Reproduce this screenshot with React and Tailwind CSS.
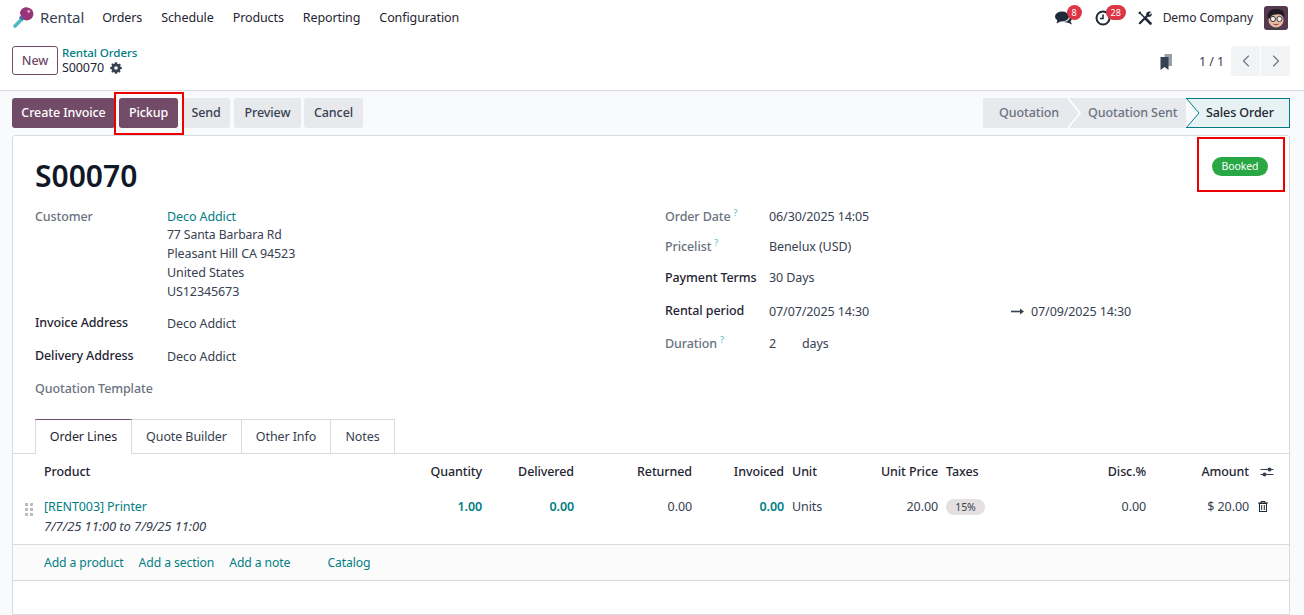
import { ChevronLeft, ChevronRight } from 'lucide-react'

const Help = () => <span className="ml-[3px] text-[9px] leading-none text-[#5bb8c4] relative -top-[5px] font-normal">?</span>

const Label = ({ children, bold, help }) => (
  <div className={`w-[132px] shrink-0 font-medium ${bold ? 'text-[#1f2532]' : 'text-[#6b7280]'}`}>
    {children}
    {help && <Help />}
  </div>
)

function KeyLogo() {
  return (
    <svg width="21" height="21" viewBox="0 0 21 21" className="-mt-[1px]">
      <path d="M2 19 L11 10" stroke="#4fb9c4" strokeWidth="3.6" strokeLinecap="round" />
      <path d="M7 6.5 C7 2.8 10.5 0 14.2 0.4 C18 0.8 20.8 3.6 20.4 7.6 C20 11 17.5 13.4 13.8 13.4 C11.5 13.4 10.2 12.6 9.4 11.6 Z" fill="#98347a" />
      <path d="M7.5 8.5 L11.5 12 L9 13.5 L6 11 Z" fill="#3f6f9e" />
      <circle cx="15.7" cy="4.4" r="1.4" fill="#dfb0cf" />
    </svg>
  )
}

function ChatIcon() {
  return (
    <svg width="18" height="16" viewBox="0 0 18 16" fill="#1f2937">
      <ellipse cx="7" cy="6.5" rx="7" ry="5" />
      <path d="M2.5 9.5 L1.5 13.5 L6.5 11 Z" />
      <path d="M15 5.5 C17 6.5 17.8 9.5 15.5 11.3 L17 14.5 L12.5 12.5 C11 12.6 9.5 12.3 8.5 11.8 C12.5 11.8 15.5 9.5 15 5.5 Z" />
    </svg>
  )
}

function ClockIcon() {
  return (
    <svg width="16" height="16" viewBox="0 0 16 16" fill="none" stroke="#1f2937" strokeWidth="2">
      <circle cx="8" cy="8" r="6.5" />
      <path d="M8 4.5 V8.5 H5" strokeWidth="1.6" />
    </svg>
  )
}

function ToolsIcon() {
  return (
    <svg width="14" height="14" viewBox="0 0 14 14" fill="none" stroke="#1f2937">
      <path d="M1.5 1.5 L7 7" strokeWidth="1.5" />
      <path d="M0.8 2.6 L2.6 0.8" strokeWidth="1.6" />
      <path d="M7.5 7.5 L12.5 12.5" strokeWidth="2.6" strokeLinecap="round" />
      <path d="M1.8 12.2 L9 5" strokeWidth="2.2" strokeLinecap="round" />
      <path d="M12.8 0.9 L10.9 2.8 L11.2 3.8 L12.1 4.1 L13.6 2.4 C14 4.6 12 6.4 9.8 5.6 L8.4 4.2 C7.8 2 9.8 0 12.8 0.9 Z" fill="#1f2937" strokeWidth="0.4" />
    </svg>
  )
}

function Avatar() {
  return (
    <div className="w-6 h-6 rounded-[3px] bg-[#54394f] overflow-hidden">
      <svg width="24" height="24" viewBox="0 0 24 24">
        <path d="M5 24 C6 20 16 20 18 24 Z" fill="#3f3f46" />
        <ellipse cx="12" cy="14" rx="7.5" ry="7.5" fill="#e8b9a0" />
        <path d="M3.5 12 C3 5 8 2.5 13 3 C18 3 21 6 20 11 C18 8.5 15 8 12 8.5 C9 9 7 9 6 12.5 Z" fill="#1f1a24" />
        <circle cx="9" cy="13" r="2.6" fill="#eef0f0" stroke="#2a2a2a" strokeWidth="0.9" />
        <circle cx="15.5" cy="13" r="2.6" fill="#eef0f0" stroke="#2a2a2a" strokeWidth="0.9" />
        <path d="M9.5 18 C11 19 13 19 14.5 18" stroke="#7a3d30" fill="none" />
      </svg>
    </div>
  )
}

function Gear() {
  return (
    <svg width="12" height="12" viewBox="0 0 12 12" fill="#374151">
      <path fillRule="evenodd" d="M5 0.3 H7 L7.3 1.8 L8.5 2.3 L9.8 1.5 L10.6 2.3 L10.5 3.5 L10.2 3.9 L10.7 5 L11.8 5.1 V7 L10.4 7.3 L9.9 8.5 L10.6 9.8 L9.5 10.7 L8.3 9.9 L7.2 10.4 L7 11.8 H5 L4.7 10.4 L3.5 9.9 L2.3 10.7 L1.3 9.7 L2.1 8.5 L1.6 7.3 L0.2 7 V5 L1.6 4.7 L2.1 3.5 L1.3 2.3 L2.3 1.3 L3.5 2.1 L4.7 1.6 Z M6 4.2 A1.8 1.8 0 1 0 6 7.8 A1.8 1.8 0 1 0 6 4.2 Z" />
    </svg>
  )
}

function Sliders() {
  return (
    <svg width="14" height="12" viewBox="0 0 14 12" fill="#374151">
      <rect x="0.5" y="3" width="13" height="1" />
      <rect x="0.5" y="8" width="13" height="1" />
      <circle cx="9.5" cy="3.5" r="2" />
      <circle cx="4.5" cy="8.5" r="2" />
    </svg>
  )
}

function Trash() {
  return (
    <svg width="10" height="11" viewBox="0 0 10 11" fill="none" stroke="#1f2937">
      <path d="M0 2 H10 M3 2 V0.5 H7 V2" />
      <rect x="1.5" y="2.5" width="7" height="8" />
      <path d="M3.7 4 V9 M6.3 4 V9" />
    </svg>
  )
}

function Grip() {
  return (
    <div className="grid grid-cols-2 gap-[2px] w-[8px]">
      {[0, 1, 2, 3, 4, 5].map((i) => (
        <span key={i} className="w-[3px] h-[3px] bg-[#b9bdc3]" />
      ))}
    </div>
  )
}

const NavBadge = ({ children, className }) => (
  <span className={`absolute -top-[5px] h-[15px] rounded-full bg-[#dc3545] text-white text-[9px] leading-[15px] text-center ${className}`}>
    {children}
  </span>
)

const StatusBtn = ({ children, className }) => (
  <button className={`h-[30px] pb-[2px] rounded-[3px] bg-[#e7e9ed] text-[#374151] font-medium ${className}`}>{children}</button>
)

const PrimaryBtn = ({ children, className }) => (
  <button className={`h-[30px] pb-[2px] rounded-[3px] bg-[#714b67] text-white font-medium ${className}`}>{children}</button>
)

const cols = [
  { label: 'Quantity', w: 'w-[65px]', value: '1.00', cls: 'text-[#017e84] font-semibold' },
  { label: 'Delivered', w: 'w-[92px]', value: '0.00', cls: 'text-[#017e84] font-semibold' },
  { label: 'Returned', w: 'w-[118px]', value: '0.00', cls: 'text-[#374151]' },
  { label: 'Invoiced', w: 'w-[92px]', value: '0.00', cls: 'text-[#017e84] font-semibold' },
]

export default function App() {
  return (
    <div className="relative h-[615px] w-[1304px] overflow-hidden bg-[#f9fafb] text-[12.5px] leading-[19px] text-[#374151] font-['Noto_Sans',sans-serif] tracking-[-0.1px]">
      {/* Navbar */}
      <header className="h-[35px] bg-white flex items-center pl-[13px] pr-[16px] text-[#1f2532]">
        <KeyLogo />
        <span className="ml-[6px] text-[15px] text-[#374151]">Rental</span>
        <nav className="ml-[18px] flex gap-[19px]">
          <span>Orders</span>
          <span>Schedule</span>
          <span>Products</span>
          <span>Reporting</span>
          <span>Configuration</span>
        </nav>
        <div className="ml-auto flex items-center">
          <div className="relative mr-[22px] flex">
            <ChatIcon />
            <NavBadge className="left-[12px] w-[15px]">8</NavBadge>
          </div>
          <div className="relative mr-[27px] flex">
            <ClockIcon />
            <NavBadge className="left-[11px] w-[20px]">28</NavBadge>
          </div>
          <ToolsIcon />
          <span className="ml-[11px] mr-[11px] text-[12.1px]">Demo Company</span>
          <Avatar />
        </div>
      </header>

      {/* Breadcrumb bar */}
      <div className="h-[56px] bg-white border-b border-[#d8dadd] flex items-start pl-[12px] pr-[14px] pt-[11px]">
        <button className="w-[46px] h-[29px] rounded-[3px] border border-[#714b67] text-[#714b67] font-medium">New</button>
        <div className="ml-[4px] -mt-[1px] leading-[15px]">
          <div className="text-[11.6px] font-medium text-[#017e84]">Rental Orders</div>
          <div className="flex items-center gap-[6px] text-[#1f2532]">S00070 <Gear /></div>
        </div>
        <div className="ml-auto flex items-center">
          <svg width="13" height="16" viewBox="0 0 13 16" className="mr-[26px] mt-[1px]">
            <path d="M4.5 0 H12 V12 H4.5 Z" fill="#9aa0a9" />
            <path d="M0.5 3 H8.5 V16 L4.5 13 L0.5 16 Z" fill="#374151" />
          </svg>
          <span className="mr-[7px]">1 / 1</span>
          <button className="w-[29px] h-[30px] rounded-l-[3px] bg-[#f2f3f4] flex items-center justify-center mr-[1px]">
            <ChevronLeft size={20} strokeWidth={1.3} color="#6b7280" />
          </button>
          <button className="w-[29px] h-[30px] rounded-r-[3px] bg-[#f2f3f4] flex items-center justify-center">
            <ChevronRight size={20} strokeWidth={1.3} color="#6b7280" />
          </button>
        </div>
      </div>

      {/* Action bar */}
      <div className="h-[44px] flex items-center pl-[12px] pr-[14px]">
        <PrimaryBtn className="w-[103px]">Create Invoice</PrimaryBtn>
        <PrimaryBtn className="ml-[4px] w-[59px]">Pickup</PrimaryBtn>
        <StatusBtn className="ml-[4px] w-[48px]">Send</StatusBtn>
        <StatusBtn className="ml-[4px] w-[67px]">Preview</StatusBtn>
        <StatusBtn className="ml-[3px] w-[59px]">Cancel</StatusBtn>
        <div className="ml-auto flex h-[30px] font-medium">
          <div className="w-[85px] bg-[#e7e9ed] text-[#6b7280] flex items-center pl-[16px] pb-[2px]">Quotation</div>
          <div className="relative w-[118px] bg-[#e7e9ed] text-[#6b7280] flex items-center pl-[20px] pb-[2px]">
            <svg width="14" height="30" viewBox="0 0 14 30" className="absolute left-0 top-0">
              <path d="M0 0 L12 15 L0 30" fill="none" stroke="#fff" strokeWidth="1.5" />
            </svg>
            Quotation Sent
          </div>
          <div className="relative w-[104px] bg-[#e6f2f3] border-y border-r border-[#017e84] text-[#1f2532] flex items-center pl-[20px] pb-[2px]">
            <svg width="14" height="30" viewBox="0 0 14 30" className="absolute left-0 -top-[1px]">
              <path d="M0 0 L13 15 L0 30 Z" fill="#f9fafb" />
              <path d="M0 0 L13 15 L0 30" fill="none" stroke="#017e84" />
            </svg>
            Sales Order
          </div>
        </div>
      </div>

      {/* Form sheet */}
      <main className="mx-[12px] w-[1278px] h-[480px] bg-white border border-[#d8dadd] rounded-t-[3px]">
        <div className="relative h-[283px] pl-[22px] pr-[16px]">
          <span className="absolute right-[21px] top-[21px] w-[56px] h-[19px] rounded-full bg-[#28a745] text-white text-[10.5px] leading-[19px] text-center">Booked</span>
          <h1 className="pt-[19px] text-[30px] leading-[42px] font-semibold text-[#111827] tracking-normal">S00070</h1>
          <div className="flex mt-[10px]">
            <div className="w-[630px]">
              <div className="flex">
                <Label>Customer</Label>
                <div className="leading-[19px]">
                  <div className="text-[#017e84] -mb-[1px]">Deco Addict</div>
                  <div className="text-[12.2px]">77 Santa Barbara Rd</div>
                  <div>Pleasant Hill CA 94523</div>
                  <div>United States</div>
                  <div>US12345673</div>
                </div>
              </div>
              <div className="flex mt-[12px]"><Label bold>Invoice Address</Label><div className="pt-[1px]">Deco Addict</div></div>
              <div className="flex mt-[13px]"><Label bold>Delivery Address</Label><div className="pt-[1px]">Deco Addict</div></div>
              <div className="flex mt-[13px]"><Label>Quotation Template</Label></div>
            </div>
            <div className="flex-1 text-[#374151]">
              <div className="flex h-[30px]"><div className="w-[104px]"><Label help>Order Date</Label></div><div>06/30/2025 14:05</div></div>
              <div className="flex h-[31px]"><div className="w-[104px]"><Label help>Pricelist</Label></div><div>Benelux (USD)</div></div>
              <div className="flex h-[33px]"><div className="w-[104px]"><Label bold>Payment Terms</Label></div><div>30 Days</div></div>
              <div className="flex h-[33px]">
                <div className="w-[104px]"><Label bold>Rental period</Label></div>
                <div className="w-[242px] pt-[1px]">07/07/2025 14:30</div>
                <div className="flex items-center h-[19px] mt-[1px]">
                  <svg width="13" height="7" viewBox="0 0 13 7" fill="#374151" className="mr-[7px]">
                    <rect x="0" y="2.7" width="10" height="1.6" />
                    <path d="M9 0.5 L13 3.5 L9 6.5 Z" />
                  </svg>
                  07/09/2025 14:30
                </div>
              </div>
              <div className="flex">
                <div className="w-[104px]"><Label help>Duration</Label></div>
                <div className="w-[33px]">2</div>
                <div>days</div>
              </div>
            </div>
          </div>
        </div>

        {/* Tabs */}
        <div className="h-[35px] flex pl-[22px] border-b border-[#d8dadd]">
          <div className="w-[97px] h-[35px] bg-white border-x border-t border-[#d8dadd] border-t-[#714b67] text-[#1f2532] text-center leading-[33px]">Order Lines</div>
          <div className="w-[110px] border-r border-t border-[#d8dadd] text-center leading-[33px]">Quote Builder</div>
          <div className="w-[89px] border-r border-t border-[#d8dadd] text-center leading-[33px]">Other Info</div>
          <div className="w-[64px] border-r border-t border-[#d8dadd] text-center leading-[33px]">Notes</div>
        </div>

        {/* Order lines */}
        <div className="h-[35px] flex items-center pl-[31px] font-medium text-[#1f2532]">
          <div className="w-[373px]">Product</div>
          {cols.map((c) => (
            <div key={c.label} className={`${c.w} text-right`}>{c.label}</div>
          ))}
          <div className="w-[85px] pl-[8px]">Unit</div>
          <div className="w-[69px] text-right">Unit Price</div>
          <div className="w-[90px] pl-[8px]">Taxes</div>
          <div className="w-[118px] text-right">Disc.%</div>
          <div className="w-[103px] text-right">Amount</div>
          <div className="ml-[11px]"><Sliders /></div>
        </div>
        <div className="h-[56px] border-b border-[#d8dadd] flex pl-[31px] pt-[8px] relative">
          <div className="absolute left-[12px] top-[14px]"><Grip /></div>
          <div className="w-[373px]">
            <div className="text-[#017e84]">[RENT003] Printer</div>
            <div className="italic mt-[1px] text-[13px] text-[#374151]">7/7/25 11:00 to 7/9/25 11:00</div>
          </div>
          {cols.map((c) => (
            <div key={c.label} className={`${c.w} text-right ${c.cls}`}>{c.value}</div>
          ))}
          <div className="w-[85px] pl-[8px]">Units</div>
          <div className="w-[69px] text-right">20.00</div>
          <div className="w-[90px] pl-[8px]">
            <span className="inline-block w-[39px] h-[16px] rounded-full bg-[#e4e0e0] text-[10.5px] leading-[16px] text-center text-[#374151]">15%</span>
          </div>
          <div className="w-[118px] text-right">0.00</div>
          <div className="w-[103px] text-right">$ 20.00</div>
          <div className="ml-[9px] pt-[4px]"><Trash /></div>
        </div>
        <div className="h-[36px] bg-[#fbfbfb] border-b border-[#d8dadd] flex items-center pl-[31px] text-[12.2px] text-[#017e84]">
          <span>Add a product</span>
          <span className="ml-[15px]">Add a section</span>
          <span className="ml-[15px]">Add a note</span>
          <span className="ml-[37px]">Catalog</span>
        </div>
      </main>

      {/* Annotation boxes */}
      <div className="absolute left-[114px] top-[92px] w-[70px] h-[43px] border-2 border-[#ee0000]" />
      <div className="absolute left-[1197px] top-[137px] w-[88px] h-[55px] border-2 border-[#ee0000]" />
    </div>
  )
}
